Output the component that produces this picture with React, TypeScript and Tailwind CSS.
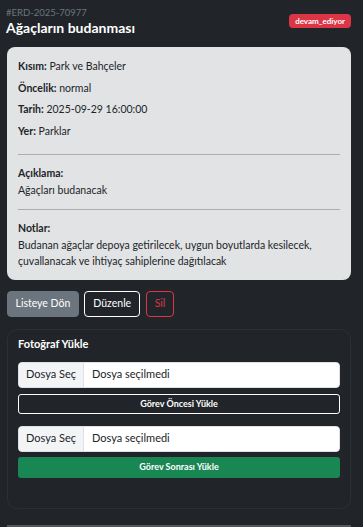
import React from "react";

const font = { fontFamily: 'Lato, "Liberation Sans", sans-serif' };

function Row({ label, value }: { label: string; value: string }) {
  return (
    <p className="mb-[5px] text-[10.5px] leading-[16.5px]">
      <span className="font-bold">{label}</span> {value}
    </p>
  );
}

function FileInput() {
  return (
    <div className="flex h-[26px] overflow-hidden rounded-[4px] border border-[#dee2e6] bg-white text-[11px] text-[#212529]">
      <div className="flex w-[65px] shrink-0 items-center justify-center border-r border-[#dee2e6] bg-[#f3f4f6]">
        Dosya Seç
      </div>
      <div className="flex items-center pl-[8px]">Dosya seçilmedi</div>
    </div>
  );
}

export default function App() {
  return (
    <div className="min-h-[527px] bg-[#212529] pl-[7px] pr-[12px] pt-[7px]" style={font}>
      <div className="flex items-start justify-between">
        <div className="-ml-px">
          <div className="text-[9.5px] leading-[12px] text-[#6c757d]">#ERD-2025-70977</div>
          <h1 className="text-[14px] font-bold leading-[18px] text-white">Ağaçların budanması</h1>
        </div>
        <span className="mt-[7px] rounded-[4px] bg-[#dc3545] px-[6px] text-[8px] font-bold leading-[14px] text-white">
          devam_ediyor
        </span>
      </div>

      <div className="mt-[10px] rounded-[8px] bg-[#e2e3e5] px-[11px] pb-[10px] pt-[11px] text-[#212529]">
        <Row label="Kısım:" value="Park ve Bahçeler" />
        <Row label="Öncelik:" value="normal" />
        <Row label="Tarih:" value="2025-09-29 16:00:00" />
        <Row label="Yer:" value="Parklar" />
        <hr className="mb-[10px] mt-[15px] border-0 border-t border-[#acadaf]" />
        <div className="text-[10.5px] leading-[16.5px]">
          <div className="font-bold">Açıklama:</div>
          <p>Ağaçları budanacak</p>
        </div>
        <hr className="mb-[10px] mt-[11px] border-0 border-t border-[#acadaf]" />
        <div className="text-[10.5px] leading-[16.5px]">
          <div className="font-bold">Notlar:</div>
          <p>
            Budanan ağaçlar depoya getirilecek, uygun boyutlarda kesilecek, çuvallanacak ve ihtiyaç sahiplerine dağıtılacak
          </p>
        </div>
      </div>

      <div className="mt-[11px] flex gap-[5.5px]">
        <button className="h-[26px] rounded-[4px] border border-[#6c757d] bg-[#6c757d] px-[7.5px] text-[10.5px] text-white">
          Listeye Dön
        </button>
        <button className="h-[26px] rounded-[4px] border border-white px-[8px] text-[10.5px] text-white">
          Düzenle
        </button>
        <button className="h-[26px] rounded-[4px] border border-[#dc3545] px-[8px] text-[10.5px] text-[#dc3545]">
          Sil
        </button>
      </div>

      <div className="mt-[12px] rounded-[10px] border border-[#2c3035] px-[10px] pb-[30px] pt-[6px]">
        <div className="mb-[10px] text-[11px] font-bold leading-[16px] text-white">Fotoğraf Yükle</div>
        <FileInput />
        <button className="mt-[6px] h-[20px] w-full rounded-[3px] border border-white text-[9px] font-bold text-white">
          Görev Öncesi Yükle
        </button>
        <div className="mt-[12px]">
          <FileInput />
        </div>
        <button className="mt-[5px] h-[21px] w-full rounded-[3px] bg-[#198754] text-[9px] font-bold text-white">
          Görev Sonrası Yükle
        </button>
      </div>

      <hr className="mt-[16px] border-0 border-t-2 border-[#55585b]" />
    </div>
  );
}
